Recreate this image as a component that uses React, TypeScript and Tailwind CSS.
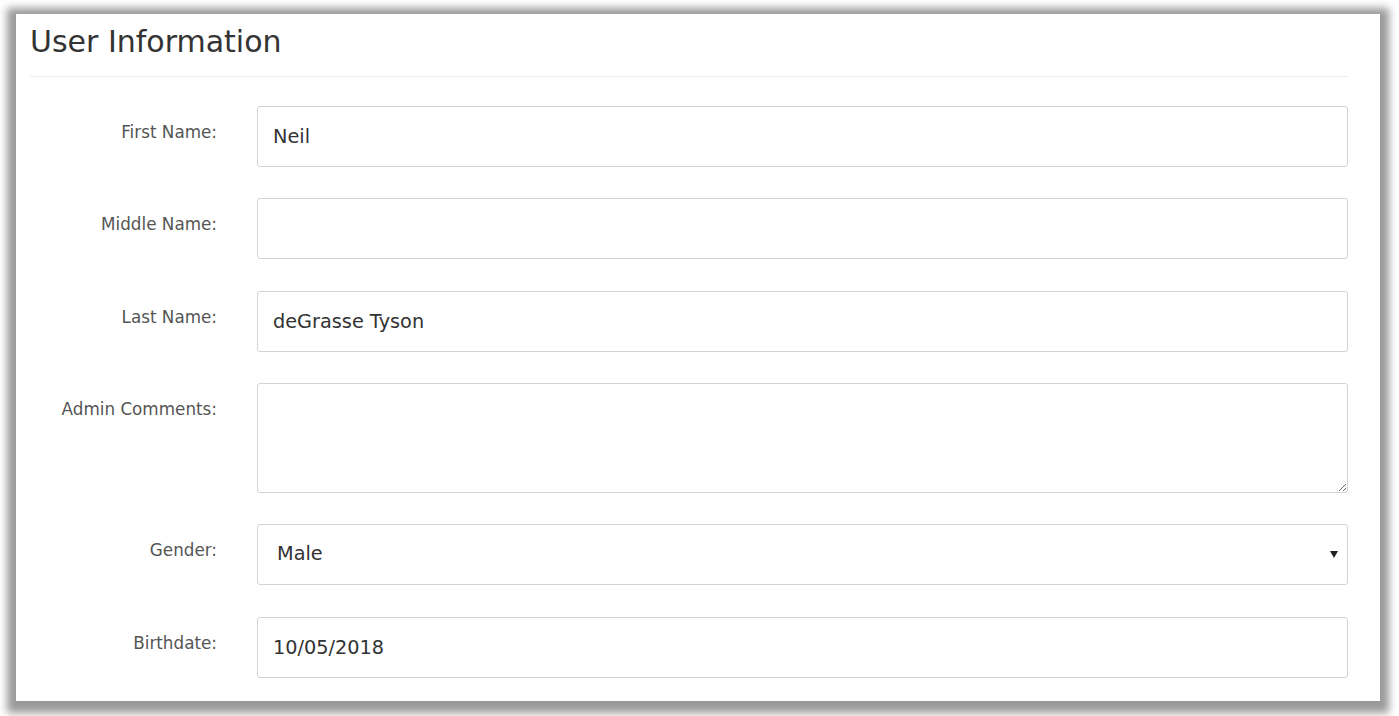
import React from "react";

type Row = { label: string; value: string; kind: "input" | "textarea" | "select"; mt: string };

const rows: Row[] = [
  { label: "First Name:", value: "Neil", kind: "input", mt: "mt-0" },
  { label: "Middle Name:", value: "", kind: "input", mt: "mt-[31px]" },
  { label: "Last Name:", value: "deGrasse Tyson", kind: "input", mt: "mt-[32px]" },
  { label: "Admin Comments:", value: "", kind: "textarea", mt: "mt-[31px]" },
  { label: "Gender:", value: "Male", kind: "select", mt: "mt-[31px]" },
  { label: "Birthdate:", value: "10/05/2018", kind: "input", mt: "mt-[32px]" },
];

function Field({ row }: { row: Row }) {
  if (row.kind === "textarea") {
    return (
      <textarea
        defaultValue={row.value}
        className="block w-full h-[110px] border border-[#d2d3d8] rounded-[3px] bg-white px-[15px] py-[10px] text-[19.3px] text-[#333] outline-none font-['DejaVu_Sans',Verdana,sans-serif]"
      />
    );
  }
  if (row.kind === "select") {
    return (
      <div className="relative flex items-center w-full h-[61px] border border-[#d2d3d8] rounded-[3px] bg-white pl-[19px] text-[19.3px] text-[#333]">
        <span>{row.value}</span>
        <svg
          className="absolute right-[9px] top-[26px]"
          width="8"
          height="7"
          viewBox="0 0 8 7"
        >
          <polygon points="0,0 8,0 4,7" fill="#222" />
        </svg>
      </div>
    );
  }
  return (
    <input
      readOnly
      defaultValue={row.value}
      className="block w-full h-[61px] border border-[#d2d3d8] rounded-[3px] bg-white px-[15px] text-[19.3px] text-[#333] outline-none font-['DejaVu_Sans',Verdana,sans-serif]"
    />
  );
}

export default function App() {
  return (
    <div className="w-[1399px] h-[716px] bg-white overflow-hidden pt-[14px] pl-[16px] font-['DejaVu_Sans',Verdana,sans-serif]">
      <div className="w-[1364px] h-[687px] bg-white shadow-[0_3px_8px_9px_rgba(0,0,0,0.4)] pl-[14px] pr-[32px]">
        <h1 className="pt-[10px] text-[30px] leading-[36px] font-normal text-[#333]">
          User Information
        </h1>
        <div className="mt-[16px] h-px bg-[#ececec]" />
        <div className="mt-[29px] flex flex-col">
          {rows.map((row) => (
            <div key={row.label} className={`flex items-start ${row.mt}`}>
              <label className="w-[187px] shrink-0 text-right pt-[16px] text-[16.8px] leading-[20px] text-[#555]">
                {row.label}
              </label>
              <div className="ml-[40px] flex-1">
                <Field row={row} />
              </div>
            </div>
          ))}
        </div>
      </div>
    </div>
  );
}
